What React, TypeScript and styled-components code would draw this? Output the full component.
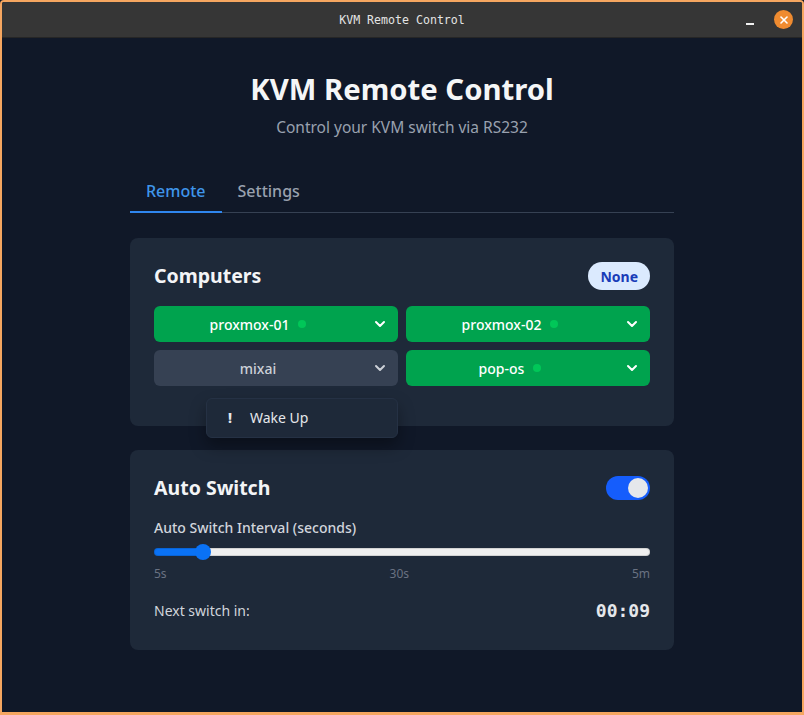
import React, { useState } from "react";
import styled, { createGlobalStyle } from "styled-components";
import { ChevronDown, X } from "lucide-react";

const GlobalStyle = createGlobalStyle`
  html, body { margin: 0; padding: 0; background: #101828; }
  body { font-family: "Noto Sans", "Open Sans", sans-serif; }
  * { box-sizing: border-box; }
`;

const Frame = styled.div`
  width: 804px;
  height: 715px;
  border: 2px solid #f5a660;
  border-bottom-width: 3px;
  border-radius: 4px 4px 0 0;
  display: flex;
  flex-direction: column;
  background: #101828;
  overflow: hidden;
`;

const TitleBar = styled.div`
  height: 36px;
  flex: none;
  background: #363636;
  border-bottom: 1px solid #262626;
  display: grid;
  grid-template-columns: 1fr auto 1fr;
  align-items: center;
`;

const WindowTitle = styled.div`
  grid-column: 2;
  font-family: "DejaVu Sans Mono", "Liberation Mono", monospace;
  font-size: 11.6px;
  color: #e4e4e4;
  letter-spacing: 0;
`;

const WindowControls = styled.div`
  grid-column: 3;
  justify-self: end;
  display: flex;
  align-items: center;
  gap: 14px;
  padding-right: 9px;
`;

const MinimizeButton = styled.div`
  width: 20px;
  height: 20px;
  display: flex;
  align-items: flex-end;
  justify-content: center;
  padding-bottom: 5px;
  &::before {
    content: "";
    width: 8px;
    height: 2px;
    background: #f0f0f0;
  }
`;

const CloseButton = styled.div`
  width: 19px;
  height: 19px;
  border-radius: 50%;
  background: #ef8b30;
  color: #fff;
  display: flex;
  align-items: center;
  justify-content: center;
`;

const Content = styled.main`
  flex: 1;
  background: #101828;
`;

const Container = styled.div`
  width: 544px;
  margin: 0 auto;
  padding-top: 33px;
  display: flex;
  flex-direction: column;
`;

const Header = styled.header`
  text-align: center;
`;

const Heading = styled.h1`
  margin: 0;
  font-size: 29.3px;
  line-height: 36px;
  font-weight: 700;
  color: #f5f6f7;
`;

const Subtitle = styled.p`
  margin: 8px 0 0;
  font-size: 15.5px;
  line-height: 24px;
  color: #99a1af;
`;

const TabList = styled.nav`
  margin-top: 32px;
  margin-bottom: 1px;
  display: flex;
  border-bottom: 1px solid #364153;
`;

const Tab = styled.div<{ $active?: boolean }>`
  padding: 8px 16px;
  font-size: 16px;
  line-height: 24px;
  font-weight: 500;
  color: ${(p) => (p.$active ? "#3f95ea" : "#99a1af")};
  border-bottom: 2px solid ${(p) => (p.$active ? "#2f86ee" : "transparent")};
  margin-bottom: -1px;
`;

const Card = styled.section<{ $padBottom?: number }>`
  position: relative;
  margin-top: 24px;
  background: #1e2939;
  border-radius: 8px;
  padding: 24px 24px ${(p) => p.$padBottom ?? 24}px;
`;

const CardHeader = styled.div`
  display: flex;
  align-items: center;
  justify-content: space-between;
`;

const CardTitle = styled.h2`
  margin: 0;
  font-size: 19.5px;
  line-height: 28px;
  font-weight: 700;
  color: #f3f4f6;
`;

const Badge = styled.span`
  height: 28px;
  padding: 0 12px;
  border-radius: 14px;
  background: #dbeafe;
  color: #193cb8;
  font-size: 14px;
  font-weight: 700;
  display: flex;
  align-items: center;
`;

const ComputerGrid = styled.div`
  margin-top: 16px;
  display: grid;
  grid-template-columns: 1fr 1fr;
  gap: 8px;
`;

const ComputerCell = styled.div`
  position: relative;
`;

const ComputerButton = styled.div<{ $online?: boolean }>`
  height: 36px;
  border-radius: 6px;
  display: flex;
  background: ${(p) => (p.$online ? "#00a34e" : "#364153")};
  color: ${(p) => (p.$online ? "#ffffff" : "#cdd1d8")};
`;

const ComputerLabel = styled.div`
  flex: 1;
  display: flex;
  align-items: center;
  justify-content: center;
  gap: 9px;
  font-size: 14px;
  font-weight: 500;
`;

const StatusDot = styled.span`
  width: 8px;
  height: 8px;
  border-radius: 50%;
  background: #00c758;
`;

const ChevronBox = styled.div`
  width: 36px;
  display: flex;
  align-items: center;
  justify-content: center;
`;

const Menu = styled.div`
  position: absolute;
  top: calc(100% + 12px);
  right: 0;
  width: 192px;
  background: #1e2939;
  border: 1px solid #253144;
  border-radius: 6px;
  box-shadow: 0 8px 16px rgba(0, 0, 0, 0.35);
  z-index: 10;
`;

const MenuItem = styled.div`
  display: flex;
  align-items: center;
  gap: 12px;
  padding: 9px 15px;
  font-size: 14px;
  line-height: 20px;
  color: #e5e7eb;
`;

const MenuIcon = styled.span`
  width: 16px;
  text-align: center;
  font-weight: 800;
`;

const ToggleTrack = styled.div<{ $on?: boolean }>`
  width: 44px;
  height: 24px;
  border-radius: 12px;
  background: ${(p) => (p.$on ? "#155dfc" : "#4a5565")};
  padding: 2px;
  display: flex;
  justify-content: ${(p) => (p.$on ? "flex-end" : "flex-start")};
`;

const ToggleKnob = styled.div`
  width: 20px;
  height: 20px;
  border-radius: 50%;
  background: #e5e7eb;
`;

const FieldLabel = styled.div`
  margin-top: 16px;
  font-size: 14px;
  line-height: 20px;
  font-weight: 500;
  color: #d1d5dc;
`;

const SliderWrap = styled.div`
  margin-top: 6px;
  height: 16px;
  display: flex;
  align-items: center;
`;

const Range = styled.input`
  -webkit-appearance: none;
  appearance: none;
  width: 100%;
  height: 8px;
  margin: 0;
  border-radius: 4px;
  box-shadow: inset 0 0 0 1px rgba(0, 0, 0, 0.12);
  outline: none;
  &::-webkit-slider-thumb {
    -webkit-appearance: none;
    width: 16px;
    height: 16px;
    border-radius: 50%;
    background: #0a72f5;
    border: none;
  }
`;

const Ticks = styled.div`
  margin-top: 6px;
  display: flex;
  justify-content: space-between;
  font-size: 12px;
  line-height: 16px;
  color: #6a7282;
`;

const NextRow = styled.div`
  margin-top: 15px;
  display: flex;
  align-items: center;
  justify-content: space-between;
  font-size: 14px;
  line-height: 20px;
  color: #d1d5dc;
`;

const Timer = styled.span`
  font-family: "DejaVu Sans Mono", "Liberation Mono", monospace;
  font-size: 18px;
  line-height: 28px;
  font-weight: 700;
  color: #e5e7eb;
`;

const computers = [
  { name: "proxmox-01", online: true },
  { name: "proxmox-02", online: true },
  { name: "mixai", online: false, menu: true },
  { name: "pop-os", online: true },
];

export default function App() {
  const [value, setValue] = useState(85);
  const p = value / 1000;
  const fill = ((8 + p * 480) / 496) * 100;
  return (
    <>
      <GlobalStyle />
      <Frame>
        <TitleBar>
          <WindowTitle>KVM Remote Control</WindowTitle>
          <WindowControls>
            <MinimizeButton />
            <CloseButton>
              <X size={12} strokeWidth={3.2} />
            </CloseButton>
          </WindowControls>
        </TitleBar>
        <Content>
          <Container>
            <Header>
              <Heading>KVM Remote Control</Heading>
              <Subtitle>Control your KVM switch via RS232</Subtitle>
            </Header>
            <TabList>
              <Tab $active>Remote</Tab>
              <Tab>Settings</Tab>
            </TabList>
            <Card $padBottom={40}>
              <CardHeader>
                <CardTitle>Computers</CardTitle>
                <Badge>None</Badge>
              </CardHeader>
              <ComputerGrid>
                {computers.map((c) => (
                  <ComputerCell key={c.name}>
                    <ComputerButton $online={c.online}>
                      <ComputerLabel>
                        {c.name}
                        {c.online && <StatusDot />}
                      </ComputerLabel>
                      <ChevronBox>
                        <ChevronDown size={16} strokeWidth={3} />
                      </ChevronBox>
                    </ComputerButton>
                    {c.menu && (
                      <Menu>
                        <MenuItem>
                          <MenuIcon>!</MenuIcon>
                          Wake Up
                        </MenuItem>
                      </Menu>
                    )}
                  </ComputerCell>
                ))}
              </ComputerGrid>
            </Card>
            <Card $padBottom={25}>
              <CardHeader>
                <CardTitle>Auto Switch</CardTitle>
                <ToggleTrack $on>
                  <ToggleKnob />
                </ToggleTrack>
              </CardHeader>
              <FieldLabel>Auto Switch Interval (seconds)</FieldLabel>
              <SliderWrap>
                <Range
                  type="range"
                  min={0}
                  max={1000}
                  value={value}
                  onChange={(e) => setValue(Number(e.target.value))}
                  style={{
                    background: `linear-gradient(to right, #0a72f5 ${fill}%, #efefef ${fill}%)`,
                  }}
                />
              </SliderWrap>
              <Ticks>
                <span>5s</span>
                <span>30s</span>
                <span>5m</span>
              </Ticks>
              <NextRow>
                <span>Next switch in:</span>
                <Timer>00:09</Timer>
              </NextRow>
            </Card>
          </Container>
        </Content>
      </Frame>
    </>
  );
}
